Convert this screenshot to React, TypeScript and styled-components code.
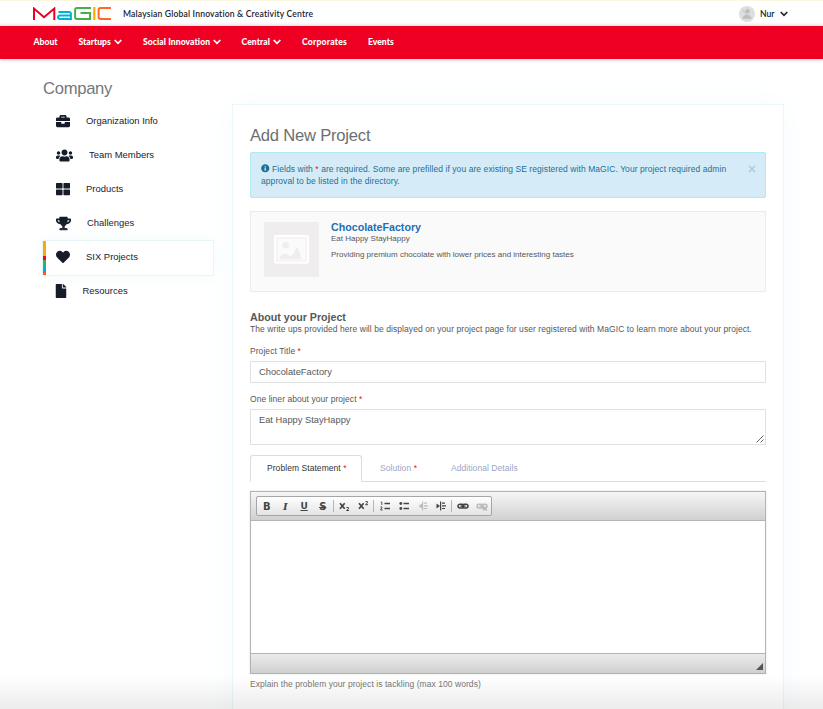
import React from "react";
import styled, { createGlobalStyle } from "styled-components";
import { FaBriefcase, FaUsers, FaThLarge, FaTrophy, FaHeart, FaFile, FaInfoCircle } from "react-icons/fa";

const GlobalStyle = createGlobalStyle`
  * { box-sizing: border-box; }
  body {
    margin: 0;
    overflow: hidden;
    background: #fff;
    color: #55585a;
    font-family: "Liberation Sans", Arial, sans-serif;
    font-size: 8.5px;
  }
`;

const Page = styled.div`
  position: relative;
  height: 709px;
  overflow: hidden;
`;

const BottomFade = styled.div`
  position: absolute;
  left: 0;
  right: 0;
  bottom: 0;
  height: 34px;
  background: linear-gradient(rgba(0, 0, 0, 0), rgba(0, 0, 0, 0.075));
  pointer-events: none;
`;

const TopBar = styled.header`
  display: flex;
  align-items: center;
  height: 26px;
  padding: 1px 35px 0 33px;
  border-top: 1px solid #fbf8df;
  background: linear-gradient(#fff 21px, #f1f1f1);
  font-family: Lato, sans-serif;
  font-weight: 600;
  color: #20242f;
`;

const Tagline = styled.span`
  flex: 1;
  margin-left: 12px;
  font-size: 8.6px;
  letter-spacing: 0.17px;
  white-space: nowrap;
`;

const UserMenu = styled.div`
  display: flex;
  align-items: center;
  font-size: 8.6px;
`;

const UserName = styled.span`
  width: 20px;
  margin-left: 5px;
`;

const Nav = styled.nav`
  position: relative;
  display: flex;
  align-items: center;
  height: 33px;
  padding: 0 0 2px 33.5px;
  background: #ef0023;
  box-shadow: 0 1px 4px rgba(0, 0, 0, 0.2);
  font-family: Lato, sans-serif;
  font-size: 8.6px;
  font-weight: 900;
  color: #fff;
`;

const NavItem = styled.a<{ $width: number; $tracking?: number }>`
  display: flex;
  align-items: center;
  gap: 3px;
  width: ${(p) => p.$width}px;
  letter-spacing: ${(p) => p.$tracking ?? 0}px;
  white-space: nowrap;
`;

const Columns = styled.main`
  display: flex;
  align-items: flex-start;
`;

const Sidebar = styled.aside`
  width: 190px;
  margin-left: 43px;
  padding-top: 19px;
`;

const PageHeading = styled.h1`
  margin: 0;
  height: 27px;
  line-height: 21px;
  font-size: 16.6px;
  font-weight: 400;
  letter-spacing: -0.28px;
  color: #75787a;
`;

const SideItem = styled.a<{ $active?: boolean }>`
  position: relative;
  display: flex;
  align-items: center;
  width: 170px;
  height: 34px;
  padding: 0 0 2px 13px;
  font-size: 9.45px;
  color: #1b2030;
  ${(p) => p.$active && `box-shadow: 0 0 0 1px #e6f6f7, 0 0 18px #effafa; background: #fff;`}
`;

const SideIcon = styled.span<{ $gap: number }>`
  display: flex;
  margin-right: ${(p) => p.$gap}px;
  color: #171c2b;
`;

const SideLabel = styled.span`
  padding-bottom: 2px;
`;

const ActiveStripe = styled.i`
  position: absolute;
  left: 0;
  top: 0;
  bottom: 0;
  width: 3px;
  background: linear-gradient(
    #ffa800 15px, #f1003b 15px, #f1003b 19px, #43b04a 19px, #43b04a 25px,
    #00b2d0 25px, #00b2d0 31px, #ff5a10 31px
  );
`;

const Panel = styled.section`
  width: 550px;
  height: 640px;
  margin-top: 46px;
  padding: 20px 17px 0;
  background: #fff;
  box-shadow: 0 0 0 1px #e9f7f8, 0 0 32px #f5fcfd;
`;

const Title = styled.h2`
  margin: 0;
  height: 27px;
  line-height: 21px;
  font-size: 16.6px;
  font-weight: 400;
  letter-spacing: -0.22px;
  color: #6c6f71;
`;

const Alert = styled.div`
  display: flex;
  justify-content: space-between;
  height: 46px;
  padding: 10px 9px 0 10px;
  border: 1px solid #b0e9f0;
  border-radius: 2px;
  background: #d5ecf8;
  color: #1d6f93;
  line-height: 12px;
  white-space: nowrap;
  letter-spacing: 0.073px;
  svg { vertical-align: -0.5px; }
`;

const CloseButton = styled.span`
  display: flex;
  margin-top: 2px;
`;

const ProjectCard = styled.article`
  display: flex;
  height: 81px;
  margin-top: 13px;
  padding: 10px 13px;
  border: 1px solid #ececec;
  background: #fafafa;
`;

const ProjectInfo = styled.div`
  margin-left: 12px;
  font-size: 8px;
  line-height: 11px;
`;

const ProjectName = styled.a`
  display: block;
  font-size: 10.66px;
  font-weight: 700;
  color: #1c6fb5;
`;

const ProjectSummary = styled.p`
  margin: 5px 0 0;
`;

const SectionHeading = styled.h3`
  margin: 19px 0 0;
  font-size: 10.66px;
  line-height: 12px;
`;

const Intro = styled.p`
  margin: 0;
  line-height: 12px;
  letter-spacing: 0.07px;
  white-space: nowrap;
`;

const Label = styled.label<{ $top: number }>`
  display: block;
  height: 15px;
  margin-top: ${(p) => p.$top}px;
  line-height: 11px;
  letter-spacing: 0.06px;
`;

const Required = styled.span`
  color: #e02020;
`;

const Field = styled.div<{ $height: number }>`
  position: relative;
  height: ${(p) => p.$height}px;
  padding: 0 8px;
  border: 1px solid #e1e1e1;
  font-size: 9.3px;
  line-height: 20px;
`;

const ResizeGrip = styled.svg`
  position: absolute;
  right: 1px;
  bottom: 1px;
`;

const Tabs = styled.div`
  display: flex;
  height: 27px;
  margin-top: 10px;
  border-bottom: 1px solid #dcdcdc;
  font-size: 8.5px;
  letter-spacing: 0.06px;
  line-height: 26px;
  color: #99a6c4;
`;

const Tab = styled.div<{ $active?: boolean; $width: number }>`
  width: ${(p) => p.$width}px;
  height: 27px;
  padding-left: ${(p) => (p.$active ? 16 : 18)}px;
  white-space: nowrap;
  ${(p) => p.$active && `
    line-height: 24px;
    border: 1px solid #dcdcdc;
    border-bottom-color: #fff;
    border-radius: 3px 3px 0 0;
    color: #333;
  `}
`;

const Editor = styled.div`
  display: flex;
  flex-direction: column;
  height: 183px;
  margin-top: 9px;
  border: 1px solid #b3b3b3;
  box-shadow: 0 0 2px rgba(0, 0, 0, 0.13);
`;

const EditorToolbar = styled.div`
  height: 29px;
  padding: 4px 5px;
  border-bottom: 1px solid #b6b6b6;
  background: linear-gradient(#f6f6f6, #cfd1cf);
`;

const ToolGroup = styled.div`
  display: flex;
  align-items: center;
  width: 236px;
  height: 20px;
  border: 1px solid #a6a6a6;
  border-radius: 2px;
  background: linear-gradient(#fff, #e4e4e4);
`;

const Tool = styled.span<{ $off?: boolean }>`
  display: flex;
  justify-content: center;
  align-items: center;
  width: 18.65px;
  height: 18px;
  padding-left: 1px;
  opacity: ${(p) => (p.$off ? 0.3 : 1)};
  font: bold 10px "DejaVu Sans", sans-serif;
  color: #444;
`;

const Underlined = styled.u`
  font-size: 9px;
  text-underline-offset: 1px;
`;

const Italic = styled.i`
  font: italic bold 10px "DejaVu Serif", serif;
`;

const Separator = styled.i`
  width: 1px;
  height: 12px;
  margin: 0 1.2px;
  background: #b5b5b5;
`;

const EditArea = styled.div`
  flex: 1;
`;

const EditorFooter = styled.div`
  display: flex;
  justify-content: flex-end;
  align-items: flex-end;
  height: 20px;
  padding: 0 2px 3px;
  border-top: 1px solid #b3b3b3;
  background: linear-gradient(#ebebeb, #cfd1cf);
`;

const Help = styled.p`
  margin: 5px 0 0;
  line-height: 11px;
  letter-spacing: 0.06px;
  color: #777;
`;

const Chevron = () => (
  <svg width="8" height="6" viewBox="0 0 8 6" fill="none" stroke="currentColor" strokeWidth="1.7">
    <path d="M.7 1 4 4.3 7.3 1" />
  </svg>
);

const Logo = () => (
  <svg width="78" height="14" viewBox="0 0 78 14" fill="none" strokeWidth="2">
    <path stroke="#ef0023" d="M1 13V1.6L11 10.3 21.3 1.6V13" />
    <path stroke="#00b2d0" d="M25.5 5h10.4q2 0 2 2v5H27q-1.9 0-1.9-1.7 0-1.8 1.9-1.8h11" />
    <path stroke="#43b04a" d="M58 1H44q-1.9 0-1.9 1.9v7.2q0 1.9 1.9 1.9h13V6H47.5" />
    <path stroke="#ffa800" strokeWidth="2.2" d="M61.3 0v13" />
    <path stroke="#ff6a22" d="M78 1H67.5q-1.9 0-1.9 1.9v7.2q0 1.9 1.9 1.9H78" />
  </svg>
);

const Avatar = () => (
  <svg width="16" height="16" viewBox="0 0 16 16">
    <circle cx="8" cy="8" r="8" fill="#dedede" />
    <circle cx="8.6" cy="5.2" r="2.1" fill="#bdbdbd" />
    <path d="M3.6 12.8q.4-4 4.6-4t4.2 4z" fill="#bdbdbd" />
    <path d="m3.2 4 9.3 8" stroke="#cacaca" strokeWidth="1.2" />
  </svg>
);

const Thumbnail = () => (
  <svg width="55" height="55" viewBox="0 0 55 55">
    <path fill="#efedee" d="M0 0h55v55H0z" />
    <rect x="11" y="14.2" width="33" height="26.5" rx="1" fill="#f3f1f2" stroke="#fff" strokeWidth="2.2" />
    <path fill="#fcfbfb" d="M13.6 16.8h27.8v21.4H13.6z" />
    <circle cx="21.7" cy="23.3" r="3.3" fill="#efedee" />
    <path fill="#efedee" d="M15.5 37.2q1-5.5 5.5-5.7 3 .2 5 3 3.500-1.500 4.500-5l2.500-4.700q3.500 4.700 4 12.400z" />
  </svg>
);

const sideItems = [
  { label: "Organization Info", Icon: FaBriefcase, size: 14, gap: 16 },
  { label: "Team Members", Icon: FaUsers, size: 17, gap: 16 },
  { label: "Products", Icon: FaThLarge, size: 14, gap: 16 },
  { label: "Challenges", Icon: FaTrophy, size: 15, gap: 16 },
  { label: "SIX Projects", Icon: FaHeart, size: 14, gap: 16, active: true },
  { label: "Resources", Icon: FaFile, size: 14, gap: 16 },
];

const IconBox = styled.span<{ $narrow: boolean }>`
  display: flex;
  margin: 0 ${(p) => (p.$narrow ? -1.75 : 0)}px;
`;

const ListIcon = ({ numbered }: { numbered?: boolean }) => (
  <svg width="10" height="10" viewBox="0 0 10 10" stroke="#444" fill="#444">
    {numbered ? (
      <path fill="none" strokeWidth=".9" d="M.8 1h1v3M.5 6h1.6L.6 9h2" />
    ) : (
      <g stroke="none"><circle cx="1.8" cy="2.5" r="1.4" /><circle cx="1.8" cy="7.5" r="1.4" /></g>
    )}
    <path strokeWidth="1.6" d="M4.5 2.5H10M4.5 7.5H10" />
  </svg>
);

const IndentIcon = ({ flip }: { flip?: boolean }) => (
  <svg width="10" height="10" viewBox="0 0 10 10" stroke="#444" fill="#444">
    <path fill="none" strokeWidth="1.2" d="M4.6.5v9M6 2.2h3M6 4.8h4M6 7.5h3" />
    <path stroke="none" d={flip ? "M4 2.5v5L.5 5z" : "M.5 2.5v5L4 5z"} />
  </svg>
);

const LinkIcon = ({ broken }: { broken?: boolean }) => (
  <svg width="12" height="10" viewBox="0 0 12 10" fill="none" stroke="#444" strokeWidth="1.5">
    <rect x="1" y="3.200" width="5.700" height="3.800" rx="1.900" />
    <rect x="5.300" y="3.200" width="5.700" height="3.800" rx="1.900" />
    <path d="M3.300 5.100h5.400" strokeWidth="1.100" />
    {broken && <path d="m7 5.500 4 4m0-4-4 4" />}
  </svg>
);

const ScriptIcon = ({ raised }: { raised?: boolean }) => (
  <svg width="11" height="12" viewBox="0 0 11 12" fill="none" stroke="#444" strokeWidth="1.7">
    <path d="m1 3.200 4.700 5.600M5.700 3.200 1 8.800" />
    <path strokeWidth="1" d={raised ? "M7.400 1.700h2.100v1.100L7.500 4.700H10" : "M7.400 7.600h2.100v1.100l-2 1.800H10"} />
  </svg>
);

const Star = () => <Required>*</Required>;

export default function App() {
  return (
    <Page>
      <GlobalStyle />
      <TopBar>
        <Logo />
        <Tagline>Malaysian Global Innovation &amp; Creativity Centre</Tagline>
        <UserMenu>
          <Avatar />
          <UserName>Nur</UserName>
          <Chevron />
        </UserMenu>
      </TopBar>
      <Nav>
        <NavItem $width={45}>About</NavItem>
        <NavItem $width={64.5}>Startups <Chevron /></NavItem>
        <NavItem $width={98.5} $tracking={0.07}>Social Innovation <Chevron /></NavItem>
        <NavItem $width={60.5} $tracking={0.07}>Central <Chevron /></NavItem>
        <NavItem $width={66} $tracking={0.22}>Corporates</NavItem>
        <NavItem $width={40}>Events</NavItem>
      </Nav>
      <Columns>
        <Sidebar>
          <PageHeading>Company</PageHeading>
          {sideItems.map(({ label, Icon, size, gap, active }) => (
            <SideItem key={label} $active={active}>
              {active && <ActiveStripe />}
              <SideIcon $gap={gap}>
                <IconBox $narrow={Icon === FaFile}><Icon size={size} /></IconBox>
              </SideIcon>
              <SideLabel>{label}</SideLabel>
            </SideItem>
          ))}
        </Sidebar>
        <Panel>
          <Title>Add New Project</Title>
          <Alert>
            <span>
              <FaInfoCircle size={8.5} /> Fields with <Star /> are required. Some are prefilled if you are existing SE
              registered with MaGIC. Your project required admin
              <br />
              approval to be listed in the directory.
            </span>
            <CloseButton>
              <svg width="8" height="8" viewBox="0 0 8 8" stroke="#abcfdb" strokeWidth="1.7">
                <path d="m1 1 6 6m0-6-6 6" />
              </svg>
            </CloseButton>
          </Alert>
          <ProjectCard>
            <Thumbnail />
            <ProjectInfo>
              <ProjectName>ChocolateFactory</ProjectName>
              Eat Happy StayHappy
              <ProjectSummary>Providing premium chocolate with lower prices and interesting tastes</ProjectSummary>
            </ProjectInfo>
          </ProjectCard>
          <SectionHeading>About your Project</SectionHeading>
          <Intro>
            The write ups provided here will be displayed on your project page for user registered with MaGIC to learn
            more about your project.
          </Intro>
          <Label $top={11}>Project Title <Star /></Label>
          <Field $height={22}>ChocolateFactory</Field>
          <Label $top={11}>One liner about your project <Star /></Label>
          <Field $height={36}>
            Eat Happy StayHappy
            <ResizeGrip width="8" height="8" viewBox="0 0 8 8" stroke="#555" strokeWidth=".9">
              <path d="m.5 7.500 7-7M4.500 7.500l3-3" />
            </ResizeGrip>
          </Field>
          <Tabs>
            <Tab $active $width={112}>Problem Statement <Star /></Tab>
            <Tab $width={71}>Solution <Star /></Tab>
            <Tab $width={110}>Additional Details</Tab>
          </Tabs>
          <Editor>
            <EditorToolbar>
              <ToolGroup>
                <Tool>B</Tool>
                <Tool><Italic>I</Italic></Tool>
                <Tool><Underlined>U</Underlined></Tool>
                <Tool><s>S</s></Tool>
                <Separator />
                <Tool><ScriptIcon /></Tool>
                <Tool><ScriptIcon raised /></Tool>
                <Separator />
                <Tool><ListIcon numbered /></Tool>
                <Tool><ListIcon /></Tool>
                <Tool $off><IndentIcon flip /></Tool>
                <Tool><IndentIcon /></Tool>
                <Separator />
                <Tool><LinkIcon /></Tool>
                <Tool $off><LinkIcon broken /></Tool>
              </ToolGroup>
            </EditorToolbar>
            <EditArea />
            <EditorFooter>
              <svg width="7" height="7" viewBox="0 0 7 7"><path fill="#555" d="M7 0v7H0z" /></svg>
            </EditorFooter>
          </Editor>
          <Help>Explain the problem your project is tackling (max 100 words)</Help>
        </Panel>
      </Columns>
      <BottomFade />
    </Page>
  );
}
